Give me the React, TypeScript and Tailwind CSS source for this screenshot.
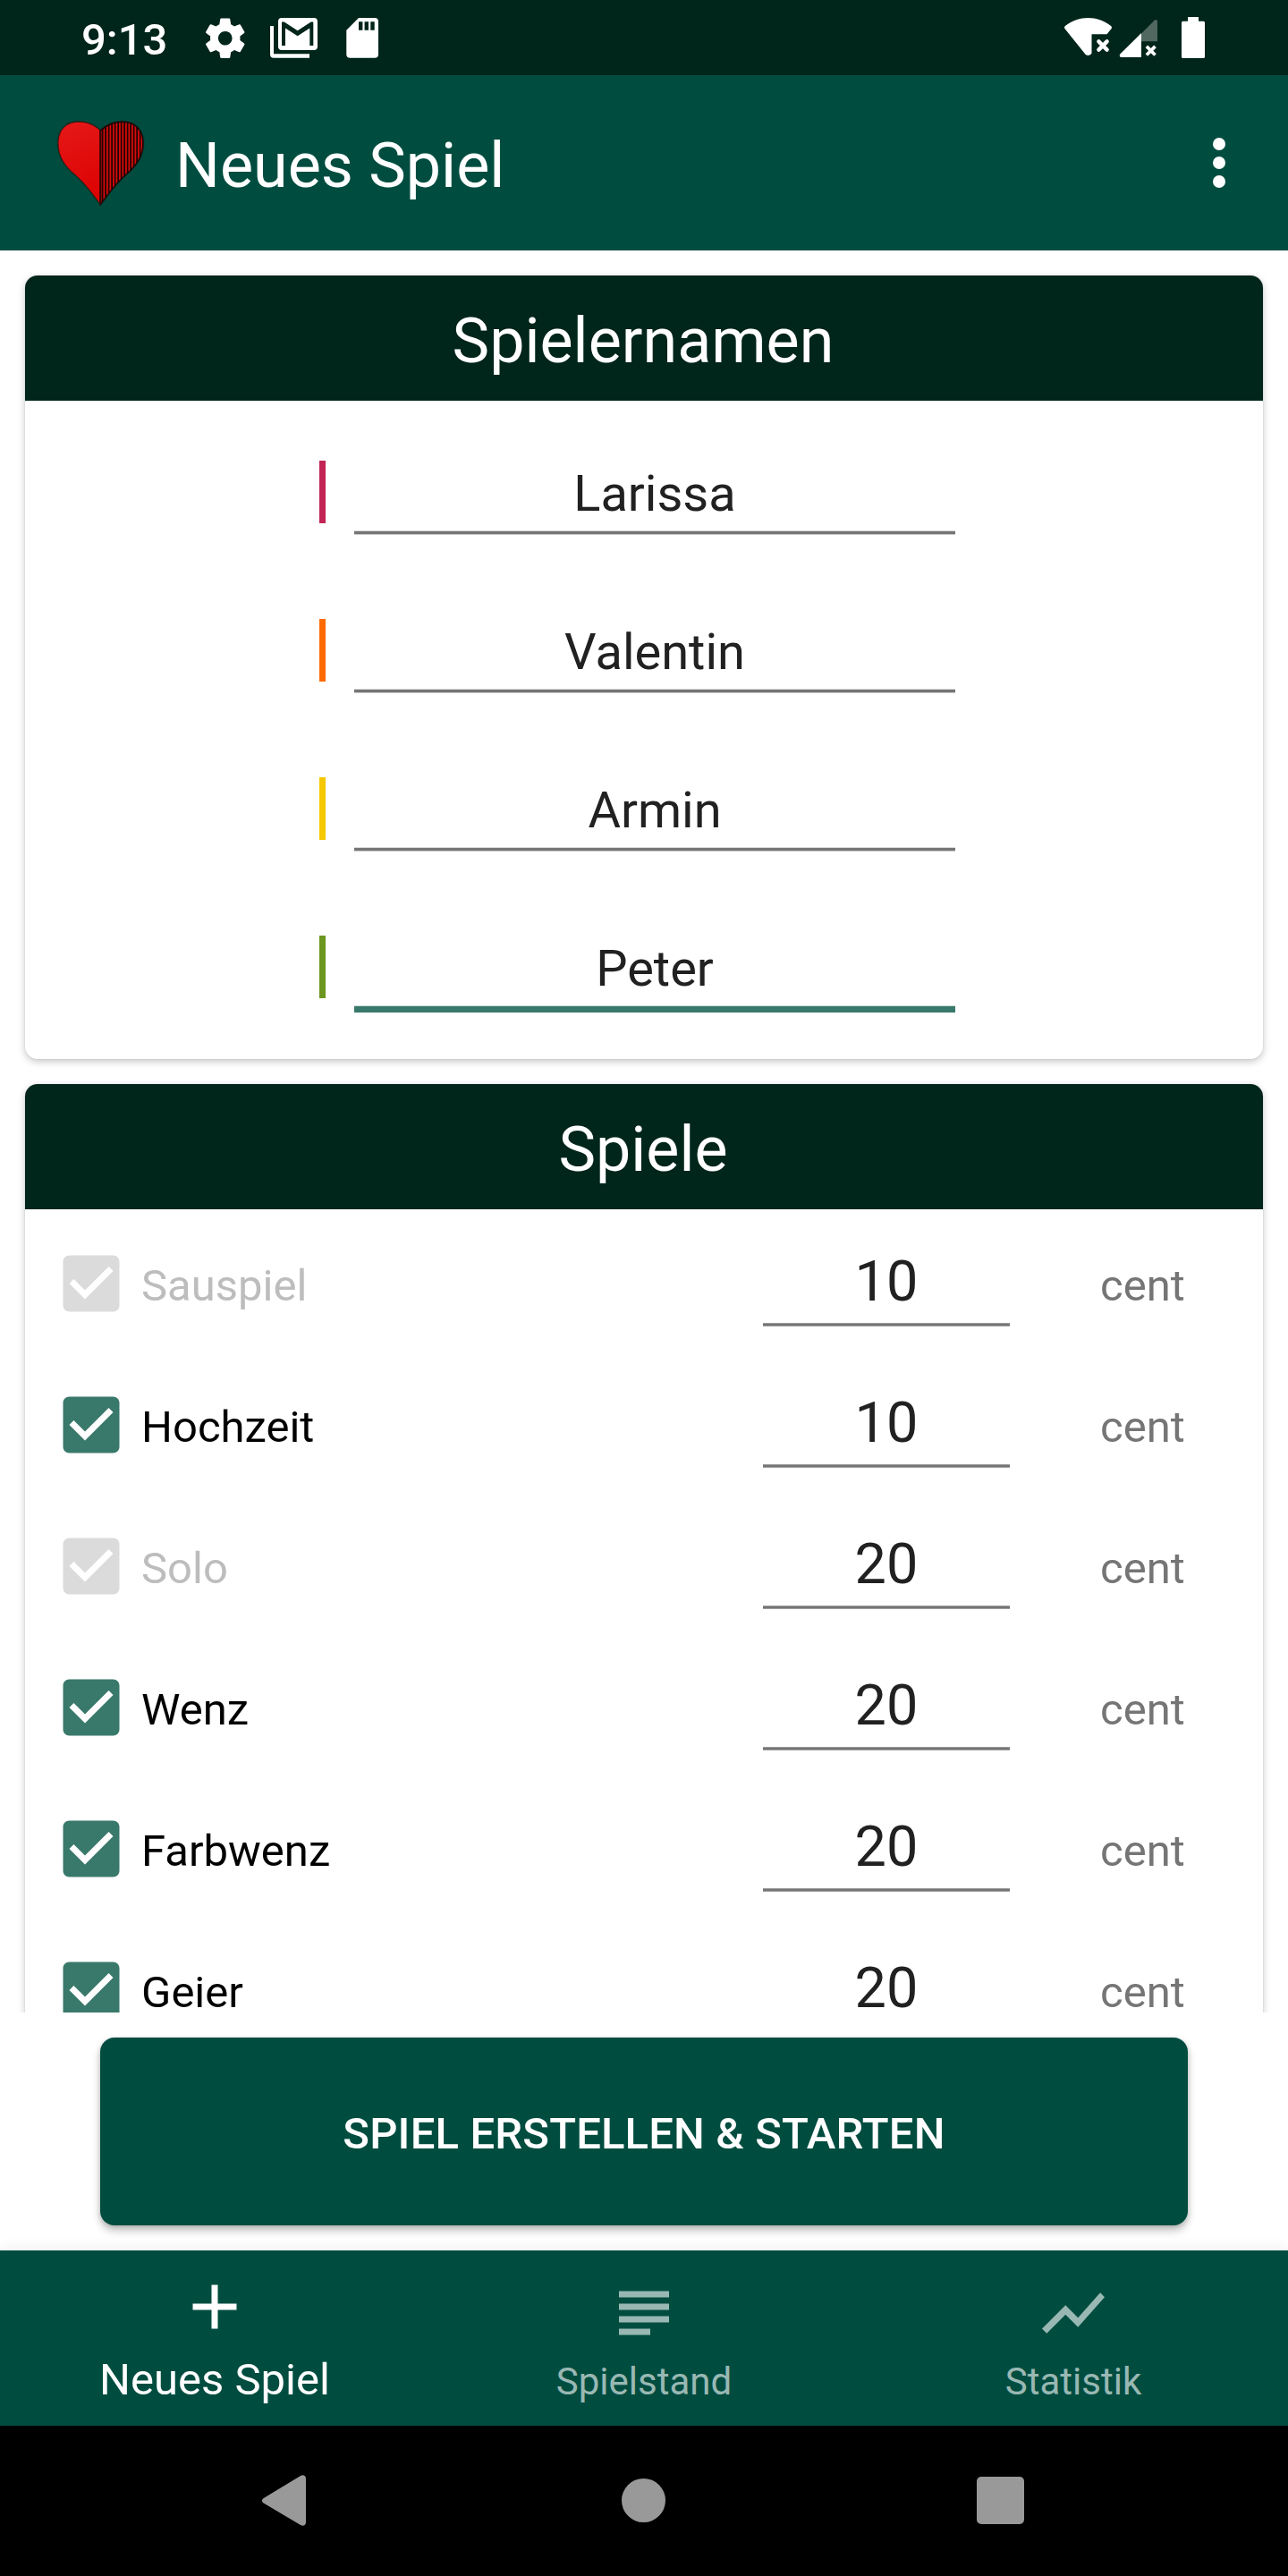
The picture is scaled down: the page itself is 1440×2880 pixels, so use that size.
import type { ReactNode } from "react";

type Player = { name: string; bar: string; focused?: boolean };
type Game = { name: string; cents: number; locked?: boolean };

const players: Player[] = [
  { name: "Larissa", bar: "bg-[#c22453]" },
  { name: "Valentin", bar: "bg-[#ff6a00]" },
  { name: "Armin", bar: "bg-[#f5c800]" },
  { name: "Peter", bar: "bg-[#6b961f]", focused: true },
];

const games: Game[] = [
  { name: "Sauspiel", cents: 10, locked: true },
  { name: "Hochzeit", cents: 10 },
  { name: "Solo", cents: 20, locked: true },
  { name: "Wenz", cents: 20 },
  { name: "Farbwenz", cents: 20 },
  { name: "Geier", cents: 20 },
];

function StatusBar() {
  return (
    <div className="flex h-[84px] shrink-0 items-start justify-between bg-[#00251a] pl-[91px] pr-[93px] text-white">
      <div className="flex">
        <span className="w-[134px] text-[49px] font-medium leading-[90px]">9:13</span>
        <svg className="mt-[15.5px] h-[53.5px] w-[53.5px]" viewBox="0 0 24 24" fill="currentColor">
          <path d="M19.43 12.98c.04-.32.07-.64.07-.98s-.03-.66-.07-.98l2.11-1.65c.19-.15.24-.42.12-.64l-2-3.46c-.12-.22-.39-.3-.61-.22l-2.49 1c-.52-.4-1.08-.73-1.69-.98l-.38-2.65C14.46 2.18 14.25 2 14 2h-4c-.25 0-.46.18-.49.42l-.38 2.65c-.61.25-1.17.59-1.69.98l-2.49-1c-.23-.09-.49 0-.61.22l-2 3.46c-.13.22-.07.49.12.64l2.11 1.65c-.04.32-.07.65-.07.98s.03.66.07.98l-2.11 1.65c-.19.15-.24.42-.12.64l2 3.46c.12.22.39.3.61.22l2.49-1c.52.4 1.08.73 1.69.98l.38 2.65c.03.24.24.42.49.42h4c.25 0 .46-.18.49-.42l.38-2.65c.61-.25 1.17-.59 1.69-.98l2.49 1c.23.09.49 0 .61-.22l2-3.46c.12-.22.07-.49-.12-.64l-2.11-1.65zM12 15.5c-1.93 0-3.5-1.57-3.5-3.5s1.57-3.5 3.5-3.5 3.5 1.57 3.5 3.5-1.57 3.5-3.5 3.5z" />
        </svg>
        <svg className="ml-[23.5px] mt-[20px] h-[45px] w-[53px]" viewBox="302 20 53 45" fill="currentColor">
          <path
            fillRule="evenodd"
            d="M315 20h36a4 4 0 0 1 4 4v28a4 4 0 0 1-4 4h-36a4 4 0 0 1-4-4V24a4 4 0 0 1 4-4zM315 51h4V31.5l13.7 8.7 13.6-8.7V51h4V24.5h-2.6l-15 9.8-15-9.8H315z"
          />
          <path d="M302 29h4v31.3h40v4.4h-40a4 4 0 0 1-4-4z" />
        </svg>
        <svg className="ml-[32px] mt-[20px] h-[45px] w-[36px]" viewBox="387 20 36 45" fill="currentColor">
          <path
            fillRule="evenodd"
            d="M401 20h18a4 4 0 0 1 4 4v36.7a4 4 0 0 1-4 4h-27.7a4 4 0 0 1-4-4V33.7zM401 24.3v9.4h4.4v-9.4zM407.6 24.3v9.4h4.4v-9.4zM414.3 24.3v9.4h4.4v-9.4z"
          />
        </svg>
      </div>
      <svg className="h-[84px] w-[157px]" viewBox="1190 0 157 84" fill="none">
        <path
          fill="#fff"
          d="M1190.6 32.3c-1-1.300-.7-2.7.6-3.6 7.5-5.5 16-8.7 25.3-8.7s17.8 3.2 25.3 8.7c1.3.9 1.6 2.3.6 3.6l-4.9 6h-17v21.2c-1.3 2.8-5.4 3.4-7.2 1.1z"
        />
        <path d="M1228.4 46.4l9.2 9.2m0-9.2l-9.2 9.2" stroke="#fff" strokeWidth="4.4" strokeLinecap="round" />
        <path fill="#50685f" d="M1276 37.5l14.4-14.6c1.4-1.5 3.6-.9 3.6 1.3V46.3h-18z" />
        <path fill="#fff" d="M1276 37v27h-22.2c-2 0-2.7-2.4-1.3-3.8z" />
        <path d="M1281.9 51.9l9.6 9.6m0-9.6l-9.6 9.6" stroke="#fff" strokeWidth="3.7" />
        <path
          fill="#fff"
          d="M1328 19h12v4.7h5.5a1.5 1.5 0 0 1 1.5 1.5v38.3a1.5 1.5 0 0 1-1.5 1.5h-23a1.5 1.5 0 0 1-1.5-1.5V25.2a1.5 1.5 0 0 1 1.5-1.5h5.5z"
        />
      </svg>
    </div>
  );
}

function HeartLogo() {
  const heart =
    "M112.3 146C105 139.5 98 136.3 88 136.3c-14 0-23 9-23 24 0 15 8 25.5 17 33.2C94.5 204 103 216 112.3 228.5 121.6 216 130 204 142.6 193.5 151.6 185.8 160 175.3 160 160.3c0-15-9-24-23-24-10 0-17.4 3.2-24.7 9.7z";
  return (
    <svg className="h-[100px] w-[104px]" viewBox="60 132 104 100">
      <defs>
        <linearGradient id="heartRed" x1="0" y1="0" x2="0.4" y2="1">
          <stop offset="0" stopColor="#e61919" />
          <stop offset="1" stopColor="#db0000" />
        </linearGradient>
        <pattern id="heartStripes" x="115.5" y="0" width="3.5" height="8" patternUnits="userSpaceOnUse">
          <rect width="3.5" height="8" fill="#1c0303" />
          <rect width="1.8" height="8" fill="#d80a0a" />
        </pattern>
        <clipPath id="heartRight">
          <rect x="111.5" y="130" width="52" height="102" />
        </clipPath>
      </defs>
      <path d={heart} fill="none" stroke="#00251a" strokeOpacity="0.35" strokeWidth="3.5" />
      <path d={heart} fill="url(#heartRed)" stroke="#4a0f0c" strokeWidth="1" />
      <g clipPath="url(#heartRight)">
        <path d={heart} fill="url(#heartStripes)" stroke="#1c0505" strokeWidth="1.4" />
      </g>
      <path d="M112.3 146v82" stroke="#3a0606" strokeWidth="2.2" />
    </svg>
  );
}

function AppBar() {
  return (
    <header className="flex h-[196px] shrink-0 items-center bg-[#004d40] pl-[60px] pr-[70px] text-white">
      <HeartLogo />
      <h1 className="ml-[32px] flex-1 pt-[6px] text-[70px] font-normal leading-[82px]">Neues Spiel</h1>
      <div className="flex flex-col gap-[7px]">
        <span className="h-[14px] w-[14px] rounded-full bg-white" />
        <span className="h-[14px] w-[14px] rounded-full bg-white" />
        <span className="h-[14px] w-[14px] rounded-full bg-white" />
      </div>
    </header>
  );
}

function Card({ title, children }: { title: string; children: ReactNode }) {
  return (
    <section className="shrink-0 rounded-[14px] bg-white shadow-[0_3px_9px_rgba(0,0,0,0.22),0_0_2px_rgba(0,0,0,0.12)]">
      <h2 className="h-[140px] rounded-t-[14px] bg-[#00251a] pr-[2px] text-center text-[70px] font-normal leading-[146px] text-white">
        {title}
      </h2>
      {children}
    </section>
  );
}

function PlayerRow({ name, bar, focused }: Player) {
  return (
    <div className="flex h-[177px] pl-[329px]">
      <div className={`mt-[53px] h-[70px] w-[7px] ${bar}`} />
      <div className="ml-[32px] w-[672px] pt-[57px]">
        <div className="text-center text-[56px] leading-[66px] text-[#212121]">{name}</div>
        {focused ? (
          <div className="mt-[8px] h-[8px] border-t border-[#cfdedb] bg-[#39796b]" />
        ) : (
          <div className="mt-[8px] h-[5px] border-b border-t border-b-[#c6c6c6] border-t-[#dcdcdc] bg-[#757575]" />
        )}
      </div>
    </div>
  );
}

function Checkbox({ locked }: { locked?: boolean }) {
  return (
    <svg
      className={locked ? "h-[84px] w-[84px] text-[#dbdbdb]" : "h-[84px] w-[84px] text-[#39796b]"}
      viewBox="0 0 24 24"
      fill="currentColor"
    >
      <path d="M19 3H5c-1.11 0-2 .9-2 2v14c0 1.1.89 2 2 2h14c1.11 0 2-.9 2-2V5c0-1.1-.89-2-2-2zm-9 14l-5-5 1.41-1.41L10 14.17l7.59-7.59L19 8l-9 9z" />
    </svg>
  );
}

function GameRow({ name, cents, locked }: Game) {
  return (
    <div className="flex h-[158px] pl-[32px]">
      <div className="flex w-[793px]">
        <div className="pt-[37px]">
          <Checkbox locked={locked} />
        </div>
        <span
          className={
            locked
              ? "ml-[14px] pt-[53px] text-[49px] leading-[57px] text-[#bdbdbd]"
              : "ml-[14px] pt-[53px] text-[49px] leading-[57px] text-black"
          }
        >
          {name}
        </span>
      </div>
      <div className="w-[276px] pt-[42px]">
        <div className="text-center text-[63px] leading-[70px] text-[#212121]">{cents}</div>
        <div className="mt-[11px] h-[4px] border-y border-[#9c9c9c] bg-[#757575]" />
      </div>
      <span className="ml-[101px] pt-[53px] text-[49px] leading-[57px] text-[#757575]">cent</span>
    </div>
  );
}

function BottomNav() {
  return (
    <nav className="grid h-[196px] shrink-0 grid-cols-3 bg-[#004d40] text-center text-white shadow-[0_-2px_16px_rgba(0,0,0,0.07)]">
      <div className="flex flex-col items-center pt-[21px]">
        <svg className="h-[84px] w-[84px]" viewBox="0 0 24 24" fill="currentColor">
          <path d="M19 13h-6v6h-2v-6H5v-2h6V5h2v6h6v2z" />
        </svg>
        <span className="mt-[11px] text-[49px] leading-[58px]">Neues Spiel</span>
      </div>
      <div className="flex flex-col items-center pt-[28px] text-[#99b8b3]">
        <svg className="h-[84px] w-[84px]" viewBox="0 0 24 24" fill="currentColor">
          <path d="M14 17H4v2h10v-2zm6-8H4v2h16V9zM4 15h16v-2H4v2zM4 5v2h16V5H4z" />
        </svg>
        <span className="mt-[10px] text-[42px] leading-[50px]">Spielstand</span>
      </div>
      <div className="flex flex-col items-center pt-[28px] text-[#99b8b3]">
        <svg className="h-[84px] w-[84px]" viewBox="0 0 24 24" fill="currentColor">
          <path d="M3.5 18.49l6-6.01 4 4L22 6.92l-1.41-1.41-7.09 7.97-4-4L2 16.99z" />
        </svg>
        <span className="mt-[10px] text-[42px] leading-[50px]">Statistik</span>
      </div>
    </nav>
  );
}

function SystemNav() {
  return (
    <div className="flex h-[168px] shrink-0 items-center bg-black pb-[1px] pl-[293px] text-[#999999]">
      <svg className="h-[57px] w-[49px]" viewBox="0 0 49 57" fill="currentColor">
        <path d="M1.3 26.2L43 .9c2.9-1.7 6-.2 6 3v49.2c0 3.2-3.1 4.7-6 3L1.3 31.3c-1.8-1.3-1.8-3.8 0-5.1z" />
      </svg>
      <div className="ml-[353px] h-[49px] w-[49px] rounded-full bg-[#999999]" />
      <div className="ml-[348px] h-[53px] w-[53px] rounded-[5px] bg-[#999999]" />
    </div>
  );
}

export default function App() {
  return (
    <div className="flex h-[2880px] w-[1440px] flex-col overflow-hidden bg-white font-['Roboto',sans-serif]">
      <StatusBar />
      <AppBar />
      <main className="flex h-[1970px] shrink-0 flex-col gap-[28px] overflow-hidden p-[28px]">
        <Card title="Spielernamen">
          <div className="py-[14px]">
            {players.map((p) => (
              <PlayerRow key={p.name} {...p} />
            ))}
          </div>
        </Card>
        <Card title="Spiele">
          <div className="pt-[4px]">
            {games.map((g) => (
              <GameRow key={g.name} {...g} />
            ))}
          </div>
        </Card>
      </main>
      <div className="h-[266px] shrink-0 px-[112px] py-[28px]">
        <button className="block h-[210px] w-full rounded-[16px] bg-[#004d40] pt-[6px] text-[49px] font-medium leading-[58px] tracking-[0.16px] text-white shadow-[0_6px_10px_rgba(0,0,0,0.24),0_1px_5px_rgba(0,0,0,0.15)]">
          SPIEL ERSTELLEN &amp; STARTEN
        </button>
      </div>
      <BottomNav />
      <SystemNav />
    </div>
  );
}
